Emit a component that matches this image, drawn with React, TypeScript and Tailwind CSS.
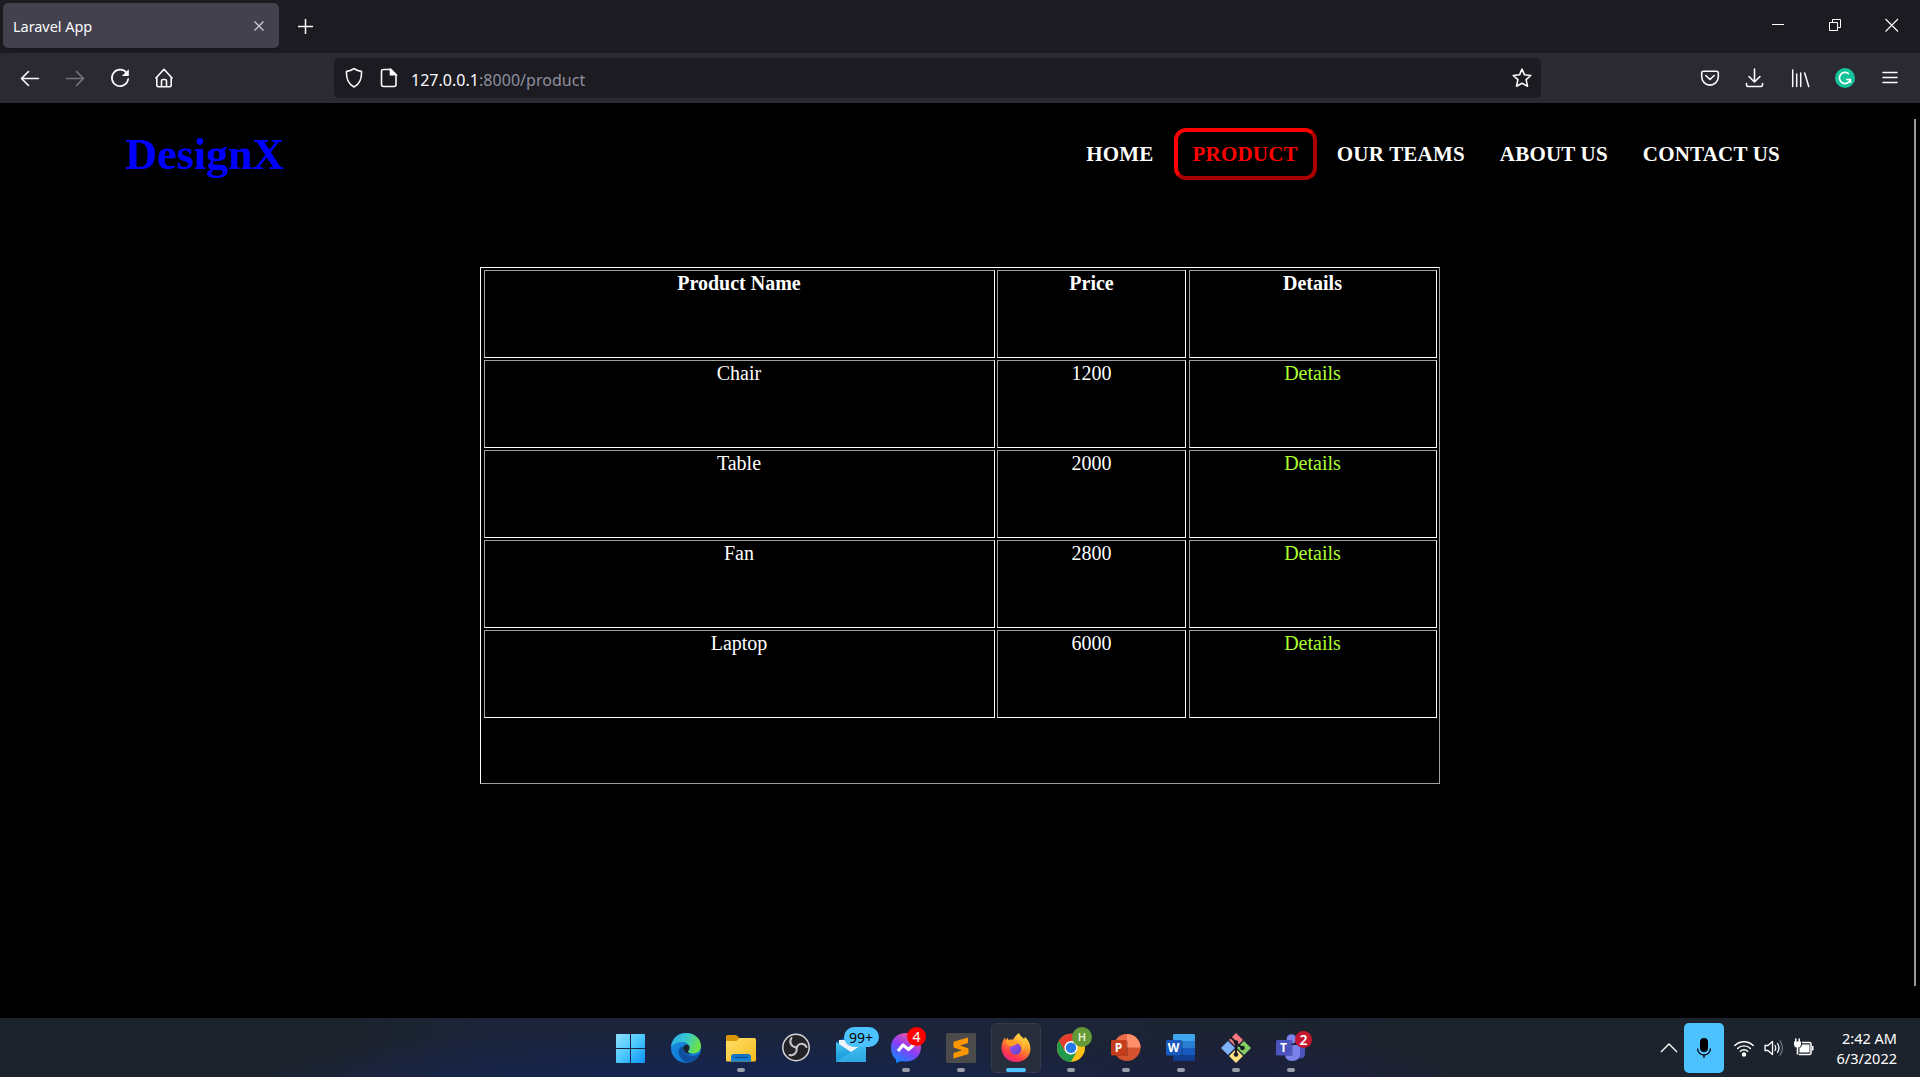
import React from "react";

const Slot = ({ children, indicator = true, active = false }: { children: React.ReactNode; indicator?: boolean; active?: boolean }) => (
  <div className={active ? "relative h-[50px] w-[50px] rounded-[5px] border border-[#353a48] bg-[#282d3b]" : "relative h-[50px] w-[50px]"}>
    <svg className={active ? "-m-px h-[50px] w-[50px]" : "h-[50px] w-[50px]"} viewBox="0 0 50 50" fill="none">
      {children}
      {indicator && !active && <rect x="21" y="45" width="8" height="4" rx="2" fill="#9a9ea8" />}
      {active && <rect x="15" y="45" width="20" height="4" rx="2" fill="#4cc2ff" />}
    </svg>
  </div>
);

const Gradient = ({ id, from, to, mid, x2 = 1, y2 = 1 }: { id: string; from: string; to: string; mid?: string; x2?: number; y2?: number }) => (
  <linearGradient id={id} x1="0" y1="0" x2={x2} y2={y2}>
    <stop stopColor={from} />
    {mid && <stop offset=".5" stopColor={mid} />}
    <stop offset="1" stopColor={to} />
  </linearGradient>
);

const iconText = { fontFamily: "Open Sans, sans-serif" };

function TaskIcons() {
  return (
    <div className="flex gap-[5px]">
      <Slot indicator={false}>
        <defs><linearGradient id="win" gradientUnits="userSpaceOnUse" x1="10" y1="11" x2="39" y2="40"><stop stopColor="#8fe0ff" /><stop offset=".5" stopColor="#4cc8fd" /><stop offset="1" stopColor="#0a94f5" /></linearGradient></defs>
        <path fill="url(#win)" d="M11 11h13v14H10V12q0-1 1-1ZM25 11h13q1 0 1 1v13H25ZM10 26h14v14H11q-1 0-1-1ZM25 26h14v13q0 1-1 1H25Z" />
      </Slot>
      <Slot indicator={false}>
        <defs>
          <Gradient id="eg1" from="#2aa7e8" mid="#35c6d3" to="#6ae04a" y2={0.35} />
          <Gradient id="eg2" from="#1b8fe0" to="#0a6fd0" />
        </defs>
        <circle cx="25" cy="25" r="15" fill="url(#eg2)" />
        <path fill="url(#eg1)" d="M10 24C11 15 17 10 25 10c9 0 15 6 15 13 0 5-4 7.500-8 7.500-3 0-5-.8-5-2 0-.8 1.500-1.500 1.500-4 0-3.500-3.500-5.500-7.500-5.500-5 0-9 2.500-11 5Z" />
        <path fill="#0f4f9f" d="M20 24c-2 1-3 4-2 7.500C19.500 36 24 40 28 39.700c4-1 7.500-3.500 10-7.200.4-.7-.3-1-.9-.7-4 2-9 1.500-12-1-2.500-2-3.500-4.500-2-7-1 0-2 0-3.100.2Z" />
        <path fill="#1b2335" d="M25 21.500c-2 .5-3.200 2.600-2.700 4.700 1 4 5 6 10 6.300q4 0 8-2v3l-2.500 0c-4 1.500-9 .5-12-1.500" opacity="0" />
        <path fill="#1b2335" d="M25 21.500c-2 .5-3.200 2.600-2.700 4.700.8 3 4 5 7.700 5-2-.7-3-1.700-3-2.700 0-.8 1.500-1.500 1.500-4 0-2-1.700-3.300-3.500-3Z" />
      </Slot>
      <Slot>
        <defs><Gradient id="fo" from="#ffdf6b" to="#f7bc1d" /><Gradient id="fb" from="#0f6fc0" to="#1a88da" x2={0} /></defs>
        <path fill="#d99508" d="M10 13.500Q10 12 11.500 12h8q1 0 1.700.8L23.500 15v4H10Z" />
        <path fill="url(#fo)" d="M10 18h10.500l3-3H38.500q1.500 0 1.500 1.500v20.500q0 1.500-1.500 1.500h-27Q10 38.500 10 37Z" />
        <path fill="url(#fb)" d="M15 38.500v-4.500q0-3 3-3h14q3 0 3 3v4.500Z" />
        <path stroke="#0a4d93" strokeWidth="1.200" d="M19 34.500h12.500" />
      </Slot>
      <Slot indicator={false}>
        <circle cx="25" cy="24.500" r="13.200" fill="#242326" stroke="#d7d5d9" strokeWidth="1.500" />
        <g fill="none" stroke="#c9c7cc" strokeWidth="2" strokeLinecap="round">
          <path d="M25.500 24.500C20.500 24 17.500 19.500 20.500 15" />
          <path d="M25.500 24.500C27.500 20 33 19.500 35.500 24" />
          <path d="M25.500 24.500C26.500 29.500 23 33 18.500 32" />
        </g>
      </Slot>
      <div className="relative h-[50px] w-[50px]">
        <Slot indicator={false}>
          <defs><Gradient id="ml" from="#42c5f4" to="#1392d8" x2={0.3} /></defs>
          <path fill="#0d5ca6" d="m10 19 15-8 15 8v7H10Z" />
          <path fill="#f1f4f7" d="M13 17h24v10l-12 7-12-7Z" />
          <path fill="url(#ml)" d="M10 19 25 29 40 19v20H10Z" />
          <path fill="#63d3fa" d="M40 19 10 39h30Z" opacity=".35" />
        </Slot>
        <div className="absolute top-[4px] left-[18px] flex h-[20px] w-[35px] items-center justify-center rounded-full bg-[#4cc2ff] pr-px text-[14px] text-black">99+</div>
      </div>
      <div className="relative h-[50px] w-[50px]">
        <Slot>
          <defs><linearGradient id="ms" x1=".2" y1="1" x2=".8" y2="0"><stop stopColor="#0a8cff" /><stop offset=".5" stopColor="#8a3df8" /><stop offset="1" stopColor="#ff5c87" /></linearGradient></defs>
          <path fill="url(#ms)" d="M25 10c8.500 0 15 6 15 14.200S33.500 38.500 25 38.500c-1.600 0-3-.2-4.400-.6L15 40v-3.500c-3-2.500-5-6.500-5-12.300C10 16 16.500 10 25 10Z" />
          <path stroke="#fff" strokeWidth="3.200" strokeLinejoin="round" d="m17 28 5-6 5.500 4.500 6-5.500" />
        </Slot>
        <div className="absolute top-[4px] left-[26px] flex h-[19px] w-[19px] items-center justify-center rounded-full bg-[#fe0000] text-[14px] text-white">4</div>
      </div>
      <Slot>
        <rect x="10" y="10" width="30" height="30" rx="1.500" fill="#4b4b4c" />
        <path fill="#ff9800" d="M17.500 19.500q0-.8.700-1L32 14.500v5.500l-8 2.600 7.500 2.300q1 .3 1 1v4.300q0 .8-.8 1L17.500 35.500V30l8.500-2.800-7.700-2.400q-.8-.3-.8-1Z" />
      </Slot>
      <Slot active>
        <defs>
          <linearGradient id="ff" x1=".8" y1="0" x2=".25" y2="1"><stop stopColor="#fff04a" /><stop offset=".4" stopColor="#ff9a2a" /><stop offset=".75" stopColor="#ff3b45" /><stop offset="1" stopColor="#e3208c" /></linearGradient>
          <Gradient id="fp" from="#a04df0" to="#5b45c8" />
        </defs>
        <path fill="url(#ff)" d="M28 10c1 3 3 3.800 5 6l1-2c3.500 3 6 8 5.300 13.500C38.500 34 33 39 25.500 39 17 39 10.500 33 10.500 24.500c0-4.500 1.500-7.500 3.500-10l.7 2.500 2-2.500.8 2.500c1.500-.5 3-.6 4.500-.3 1.500-2.700 3.500-5 6-6.700Z" />
        <circle cx="24.500" cy="26" r="5.700" fill="url(#fp)" />
        <path fill="#ff9c25" d="M14 18c3-1.500 6-1.500 8.500.2 1 .8 2.500 1 4.500 1-.6 2-2 2.500-3.600 3-1.700.6-2.400 1.500-4 1-2-.6-4-2.500-5.400-5.200Z" />
        <path fill="#ffc23a" d="M28 17c4 2 5 6.500 3.500 10.500 2-1.500 3-5 2-8.500-1.500-2.500-3.500-3.500-5.500-2Z" />
      </Slot>
      <div className="relative h-[50px] w-[50px]">
        <Slot>
          <circle cx="25" cy="24.800" r="14" fill="#fbc116" />
          <path fill="#e33b2e" d="M12.900 17.800A14 14 0 0 1 37.100 17.800H25L18.900 28.300Z" />
          <path fill="#229a4b" d="M12.900 17.800 19 28.300 25 31.800 25 38.800A14 14 0 0 1 12.900 17.800Z" />
          <path fill="#229a4b" d="m24 31.800 7-3.500L25 38.800l-4-1Z" />
          <circle cx="25" cy="24.800" r="6.700" fill="#fff" />
          <circle cx="25" cy="24.800" r="5.200" fill="#2378ea" />
        </Slot>
        <div className="absolute top-[4px] left-[26px] flex h-[20px] w-[20px] items-center justify-center rounded-full bg-[#649b38] text-[11px] font-semibold text-[#e2f0d2]">H</div>
      </div>
      <Slot>
        <circle cx="26" cy="24.500" r="13.500" fill="#d35230" />
        <path fill="#ed6c47" d="M26 11a13.500 13.500 0 0 0-13.500 13.500H26Z" />
        <path fill="#ff8f6b" d="M26 11a13.500 13.500 0 0 1 13.500 13.500H26Z" />
        <path fill="#000" opacity=".2" d="M12 17h13q2 0 2 2v14H13Z" />
        <rect x="10" y="17" width="15.500" height="15.500" rx="1.500" fill="#c43e1c" />
        <text x="17.500" y="29" fill="#fff" fontSize="12" fontWeight="700" textAnchor="middle" style={iconText}>P</text>
      </Slot>
      <Slot>
        <path fill="#41a5ee" d="M18 11h20q1 0 1 1v6H17v-6q0-1 1-1Z" />
        <path fill="#2b7cd3" d="M17 18h22v7H17Z" />
        <path fill="#185abd" d="M17 25h22v7H17Z" />
        <path fill="#103f91" d="M17 32h22v5q0 1-1 1H18q-1 0-1-1Z" />
        <path fill="#000" opacity=".2" d="M17 17h8q2 0 2 2v14H17Z" />
        <rect x="10" y="17" width="15.500" height="15.500" rx="1.500" fill="#185abd" />
        <text x="17.500" y="29" fill="#fff" fontSize="12" fontWeight="700" textAnchor="middle" style={iconText}>W</text>
      </Slot>
      <Slot>
        <path fill="#f57b80" d="m25 10 7 7-7 7-7-7Z" />
        <path fill="#7fb2fa" d="m17 18 7 7-7 7-7-7Z" />
        <path fill="#84cf62" d="m33 18 7 7-7 7-7-7Z" />
        <path fill="#fee07e" d="m25 26 7 7-7 7-7-7Z" />
        <path stroke="#181b26" strokeWidth="2" d="m19.500 14 5.500 5.500v13M25 20l7 5.500" />
        <circle cx="25" cy="19.500" r="2.200" fill="#181b26" /><circle cx="31.500" cy="25" r="2.300" fill="#181b26" /><circle cx="25" cy="31.500" r="2.300" fill="#181b26" />
      </Slot>
      <div className="relative h-[50px] w-[50px]">
        <Slot>
          <circle cx="36" cy="18" r="3.500" fill="#5059c9" />
          <path fill="#4b53bc" d="M31 22.500h8v8q0 5-5 5-3 0-3-3Z" />
          <circle cx="25.500" cy="16" r="4.800" fill="#7b83eb" />
          <path fill="#7b83eb" d="M19 22h15v8.500q0 7.500-8 7.500-7 0-7-7Z" />
          <path fill="#000" opacity=".2" d="M17 17h8q2 0 2 2v14H18Z" />
          <rect x="10" y="17" width="15.500" height="15.500" rx="1.500" fill="#4b53bc" />
          <text x="17.500" y="29" fill="#fff" fontSize="12" fontWeight="700" textAnchor="middle" style={iconText}>T</text>
        </Slot>
        <div className="absolute top-[8px] left-[29px] flex h-[17px] w-[17px] items-center justify-center rounded-full bg-[#c4172f] pb-px text-[14px] font-semibold text-white">2</div>
      </div>
    </div>
  );
}

function BrowserChrome() {
  return (
    <header className="font-['Noto_Sans',sans-serif] text-[#fbfbfe]">
      <div className="flex h-[53px] items-start bg-[#1c1b22]">
        <div className="mt-[3px] ml-[3px] flex h-[45px] w-[276px] items-center rounded-[5px] bg-[#42414d] pr-[14px] pl-[10px] shadow">
          <span className="flex-1 pt-[2px] text-[14.500px] tracking-[-0.05px]">Laravel App</span>
          <svg width="12" height="12" viewBox="0 0 12 12" stroke="#cfcfd8" strokeWidth="1.200"><path d="m1.500 1.500 9 9m0-9-9 9" /></svg>
        </div>
        <svg className="mt-[18px] ml-[18px]" width="17" height="17" viewBox="0 0 17 17" stroke="#fbfbfe" strokeWidth="1.500"><path d="M8.500 1v15M1 8.500h15" /></svg>
        <div className="mt-[15px] mr-[18px] ml-auto flex gap-[37px]">
          <svg width="20" height="20" viewBox="0 0 20 20" stroke="#fff" shapeRendering="crispEdges"><path d="M4 9.500h12" /></svg>
          <svg width="20" height="20" viewBox="0 0 20 20" fill="none" stroke="#fff"><path d="M4.500 7.500h8v8h-8ZM7.500 7.500v-3h8v8h-3" /></svg>
          <svg width="20" height="20" viewBox="0 0 20 20" stroke="#fff" strokeWidth="1.100"><path d="m3.500 4 12.500 12.500M16 4 3.500 16.500" /></svg>
        </div>
      </div>
      <div className="flex h-[50px] items-center bg-[#2b2a33] pl-5">
        <div className="flex w-[314px] gap-[25px]">
          <svg width="20" height="20" viewBox="0 0 20 20" fill="none" stroke="#fbfbfe" strokeWidth="1.600" strokeLinecap="round" strokeLinejoin="round"><path d="M18.500 10.500h-17M8.500 3.500l-7 7 7 7" /></svg>
          <svg width="20" height="20" viewBox="0 0 20 20" fill="none" stroke="#77767e" strokeWidth="1.600" strokeLinecap="round" strokeLinejoin="round"><path d="M1.500 10.500h17M11.500 3.500l7 7-7 7" /></svg>
          <svg width="20" height="20" viewBox="0 0 20 20" fill="none"><path d="M16.800 5.200A8.200 8.200 0 1 0 18.200 11" stroke="#fbfbfe" strokeWidth="1.700" strokeLinecap="round" /><path fill="#fbfbfe" d="M18.800 1.200v6.200q0 .7-.7.700h-6.200Z" /></svg>
          <svg className="-ml-px" width="20" height="20" viewBox="0 0 20 20" fill="none" stroke="#fbfbfe" strokeWidth="1.600" strokeLinejoin="round"><path d="M1.500 10.500 10 1.300l8.500 9.200M2.800 9.500v7.500q0 1.700 1.700 1.700h11q1.700 0 1.700-1.700V9.500M7.500 18.500V13q0-1.500 1.500-1.500h2q1.500 0 1.500 1.500v5.500" /></svg>
        </div>
        <div className="flex h-10 w-[1207px] items-center rounded-[5px] bg-[#1c1b22] pr-[9px] pl-[10px]">
          <svg width="20" height="20" viewBox="0 0 20 20" fill="none" stroke="#fbfbfe" strokeWidth="1.600" strokeLinejoin="round"><path d="M10 .5c2.300 1.600 4.500 2.500 7.400 2.900C18 10 15.500 16.300 10 19 4.500 16.300 2 10 2.600 3.400 5.500 3 7.700 2.100 10 .5Z" /></svg>
          <svg className="ml-[15px]" width="20" height="20" viewBox="0 0 20 20" fill="none" stroke="#fbfbfe" strokeWidth="1.600"><path d="M4.500 1.500H12l5 5v10q0 2-2 2H4.500q-2 0-2-2v-13q0-2 2-2Z" /><path fill="#fbfbfe" d="M11.500 1.500v5.300H17Z" /></svg>
          <span className="ml-[12px] flex-1 pt-[4px] text-[16px] tracking-[0.03px]">127.0.0.1<span className="text-[#8f8f9d]">:8000/product</span></span>
          <svg width="20" height="20" viewBox="0 0 20 20" fill="none" stroke="#fbfbfe" strokeWidth="1.600" strokeLinejoin="round"><path d="m10 1.200 2.500 5.600 6.300.7-4.700 4.200 1.400 6.500L10 15.200l-5.500 3 1.400-6.500L1.200 7.500l6.300-.7Z" /></svg>
        </div>
        <div className="mr-5 ml-auto flex gap-[25px]">
          <svg width="20" height="20" viewBox="0 0 20 20" fill="none" stroke="#fbfbfe" strokeWidth="1.600" strokeLinejoin="round" strokeLinecap="round"><path d="M3.500 3.300h13q1.800 0 1.800 1.800v3.700a8.300 8.300 0 0 1-16.600 0V5.100q0-1.800 1.800-1.800ZM5.800 7.500l4.200 4 4.200-4" /></svg>
          <svg width="20" height="20" viewBox="0 0 20 20" fill="none" stroke="#fbfbfe" strokeWidth="1.600" strokeLinejoin="round" strokeLinecap="round"><path d="M9.500 1v13M4 8.500 9.500 14l5.500-5.500M1.500 15.500V17q0 1.500 1.500 1.500h13q1.500 0 1.500-1.500v-1.500" /></svg>
          <svg width="20" height="20" viewBox="0 0 20 20" fill="none" stroke="#fbfbfe" strokeWidth="1.500" strokeLinecap="round"><path d="M2.700 2v16.500M6.700 6v12.500M10.700 5v13.500M14.700 5l4 13.500" /></svg>
          <svg width="20" height="20" viewBox="0 0 20 20" fill="none"><circle cx="10" cy="10" r="10" fill="#15c39a" /><path d="M14 6a5.600 5.600 0 1 0 1.400 5.500M15.300 15v-3.500h-4" stroke="#fff" strokeWidth="1.700" /></svg>
          <svg width="20" height="20" viewBox="0 0 20 20" stroke="#fbfbfe" strokeWidth="1.500" strokeLinecap="round"><path d="M3 4.500h14M3 9.500h14M3 14.500h14" /></svg>
        </div>
      </div>
    </header>
  );
}

const products = [
  ["Chair", "1200"],
  ["Table", "2000"],
  ["Fan", "2800"],
  ["Laptop", "6000"],
];

const cell = "h-[88px] border border-t-[#a0a0a0] border-r-white border-b-white border-l-[#a0a0a0] pt-px";

const Row = ({ name, price, details, head = false }: { name: string; price: string; details: string; head?: boolean }) => (
  <div className={head ? "flex font-bold" : "flex"}>
    <div className={`${cell} w-[511px] pr-px`}>{name}</div>
    <div className={`${cell} ml-[2px] w-[189px]`}>{price}</div>
    <div className={head ? `${cell} ml-[3px] w-[248px] pr-px` : `${cell} ml-[3px] w-[248px] pr-px text-[#adff2f]`}>{details}</div>
  </div>
);

function Page() {
  return (
    <main className="flex h-[915px] bg-black font-['Liberation_Serif',serif] text-white">
      <div className="w-[1914px]">
        <div className="flex h-[164px] items-start justify-between pr-[134px] pl-[125.500px]">
          <h1 className="mt-[26px] text-[44px] leading-[52px] font-bold text-[#0000ff]">DesignX</h1>
          <nav className="mt-[25px] flex items-center text-[21px] leading-[24px] font-bold tracking-[0.2px]">
            <a className="mr-[5px] px-[15px]">HOME</a>
            <a className="mr-[5px] rounded-[12px] border-4 border-t-[#ff0000] border-r-[#aa0000] border-b-[#aa0000] border-l-[#ff0000] px-[15px] py-[10px] text-[#ff0000]">PRODUCT</a>
            <a className="mr-[5px] px-[15px]">OUR TEAMS</a>
            <a className="mr-[5px] px-[15px]">ABOUT US</a>
            <a className="pl-[15px]">CONTACT US</a>
          </nav>
        </div>
        <div className="ml-[480px] flex h-[517px] w-[960px] flex-col gap-[2px] border border-t-white border-r-[#a0a0a0] border-b-[#a0a0a0] border-l-white pt-[2px] pl-[3px] text-center text-[20px] leading-[22px]">
          <Row head name="Product Name" price="Price" details="Details" />
          {products.map(([name, price]) => <Row key={name} name={name} price={price} details="Details" />)}
        </div>
      </div>
      <div className="mt-[16px] h-[867px] w-[2px] bg-[#9a9a9a]" />
    </main>
  );
}

function Taskbar() {
  return (
    <footer className="flex h-[59px] items-start bg-[#1d232c] bg-[radial-gradient(ellipse_480px_70px_at_700px_75px,#132356_0%,#17244a_45%,transparent_100%),radial-gradient(ellipse_260px_60px_at_1230px_75px,#1b1f45_0%,transparent_100%),linear-gradient(90deg,transparent_340px,#1b2438_480px,#1b2438_1000px,transparent_1450px)] pt-[5px] font-['Noto_Sans',sans-serif] text-white">
      <div className="w-[606px]" />
      <TaskIcons />
      <div className="ml-auto flex items-center pr-[23px]">
        <svg width="18" height="50" viewBox="0 0 18 50" fill="none" stroke="#fff" strokeWidth="1.300"><path d="m1 29 8-8 8 8" /></svg>
        <div className="ml-[6px] h-[50px] w-[40px] rounded-[5px] bg-[#4cc2ff]">
          <svg width="40" height="50" viewBox="0 0 40 50" fill="none"><rect x="16" y="15" width="8" height="14" rx="4" fill="#000" /><path stroke="#000" strokeWidth="1.300" d="M13.500 25.500a6.500 6.500 0 0 0 13 0M20 32v3" /></svg>
        </div>
        <svg className="ml-[10px]" width="20" height="50" viewBox="0 0 20 50" fill="none" stroke="#fff" strokeWidth="1.400" strokeLinecap="round"><path d="M.8 22.500a13 13 0 0 1 18.400 0M3.600 25.500a9 9 0 0 1 12.800 0M6.300 28.300a5.200 5.200 0 0 1 7.400 0" /><circle cx="10" cy="31.500" r="1.500" fill="#fff" /></svg>
        <svg className="ml-[10px]" width="20" height="50" viewBox="0 0 20 50" fill="none" stroke="#fff" strokeWidth="1.300" strokeLinecap="round" strokeLinejoin="round"><path d="M1 22.500h3l4.500-4v13l-4.500-4H1ZM11 22.500q1.500 2.500 0 5M13.500 20.500q3 4.500 0 9" /><path d="M16 18q5 7 0 14" stroke="#6b707b" /></svg>
        <svg className="ml-[10px]" width="20" height="50" viewBox="0 0 20 50" fill="none" stroke="#fff"><path strokeWidth="1.500" d="M5 31.500h10.500q1.500 0 1.500-1.500v-9q0-1.500-1.500-1.500H8" /><path fill="#fff" stroke="none" d="M8 21.500h7.500v8H5.500v-4.500Q8 24 8 21.500ZM18 23h1.500v4.500H18ZM0 18.500h7v3q0 2.500-2.700 3v7H2.700v-7Q0 24 0 21.500ZM1 15.500h1.500v3H1ZM4.500 15.500H6v3H4.500Z" /></svg>
        <div className="w-[83px] pb-px text-right text-[14.500px] leading-[20px]"><div>2:42 AM</div><div>6/3/2022</div></div>
      </div>
    </footer>
  );
}

export default function App() {
  return (
    <div className="h-[1077px] w-[1920px] overflow-hidden bg-black">
      <BrowserChrome />
      <Page />
      <Taskbar />
    </div>
  );
}
